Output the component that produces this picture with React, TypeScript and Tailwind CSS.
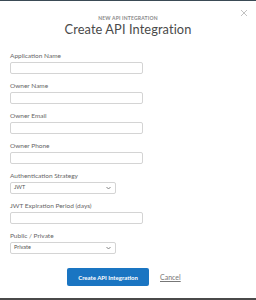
import React from "react";

function Field({ label }: { label: string }) {
  return (
    <div className="flex flex-col">
      <div className="h-[8px] text-[6.5px] leading-[8px] text-[#666]">{label}</div>
      <div className="mt-[2px] h-[12px] w-[133px] rounded-[2px] border border-[#d4d4d4] bg-white" />
    </div>
  );
}

function SelectField({ label, value }: { label: string; value: string }) {
  return (
    <div className="flex flex-col">
      <div className="h-[8px] text-[6.5px] leading-[8px] text-[#666]">{label}</div>
      <div className="mt-[2px] flex h-[12px] w-[106px] items-center justify-between rounded-[2px] border border-[#d4d4d4] bg-white pl-[3px] pr-[4px]">
        <span className="text-[5.5px] leading-none text-[#555]">{value}</span>
        <svg width="5" height="4" viewBox="0 0 5 4">
          <path d="M0.5 1 L2.5 3 L4.5 1" fill="none" stroke="#777" strokeWidth="0.9" />
        </svg>
      </div>
    </div>
  );
}

export default function App() {
  return (
    <div
      className="flex h-[300px] w-[256px] flex-col bg-white"
      style={{ fontFamily: "Lato, 'Liberation Sans', sans-serif" }}
    >
      <div className="h-[1px] bg-[#3a4a55]" />
      <div className="relative flex flex-1 flex-col">
        <div className="absolute right-[8px] top-[8px]">
          <svg width="8" height="8" viewBox="0 0 8 8">
            <path d="M1 1 L7 7 M7 1 L1 7" stroke="#bbb" strokeWidth="0.9" />
          </svg>
        </div>
        <div className="mt-[14px] text-center text-[5px] font-bold leading-[6px] tracking-[0.2px] text-[#888]">
          NEW API INTEGRATION
        </div>
        <div className="text-center text-[12.8px] leading-[16px] tracking-[0.1px] text-[#4a4a4a]">
          Create API Integration
        </div>
        <div className="ml-[10px] mt-[15px] flex flex-col gap-[8px]">
          <Field label="Application Name" />
          <Field label="Owner Name" />
          <Field label="Owner Email" />
          <Field label="Owner Phone" />
          <SelectField label="Authentication Strategy" value="JWT" />
          <Field label="JWT Expiration Period (days)" />
          <SelectField label="Public / Private" value="Private" />
        </div>
        <div className="mt-[14px] flex items-center">
          <div className="ml-[67px] flex h-[18px] w-[82px] items-center justify-center rounded-[2px] bg-[#1a75c2] text-[6px] font-bold text-white">
            Create API Integration
          </div>
          <span className="ml-[11px] text-[7px] text-[#777] underline">Cancel</span>
        </div>
      </div>
      <div className="h-[2px] bg-[#4a4a4a]" />
    </div>
  );
}
